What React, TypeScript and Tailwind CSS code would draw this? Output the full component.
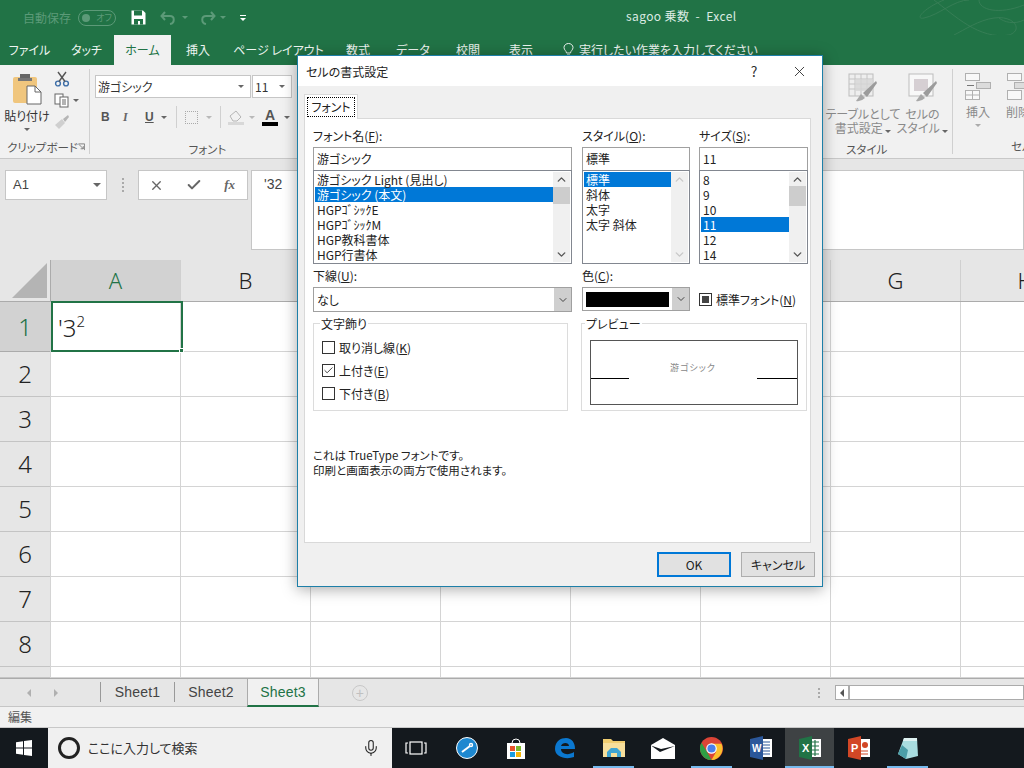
import { ChevronDown, ChevronUp, Check, X, Mic } from 'lucide-react'

const jp = 'font-["Noto_Sans_CJK_JP","Noto_Sans",sans-serif] [font-feature-settings:"palt"]'
const headerFont = "font-['Noto_Sans',sans-serif] font-light"

const tabs = [
  { label: 'ファイル', w: 'w-[59px]' },
  { label: 'タッチ', w: 'w-[55px]' },
  { label: 'ホーム', w: 'w-[57px]', active: true },
  { label: '挿入', w: 'w-[54px]' },
  { label: 'ページ レイアウト', w: 'w-[107px]' },
  { label: '数式', w: 'w-[52px]' },
  { label: 'データ', w: 'w-[58px]' },
  { label: '校閲', w: 'w-[52px]' },
  { label: '表示', w: 'w-[54px]' },
]

const columns = ['A', 'B', 'C', 'D', 'E', 'F', 'G', 'H']
const rows = [
  { n: 1, h: 'h-[50px]' },
  { n: 2, h: 'h-[45px]' },
  { n: 3, h: 'h-[45px]' },
  { n: 4, h: 'h-[45px]' },
  { n: 5, h: 'h-[45px]' },
  { n: 6, h: 'h-[45px]' },
  { n: 7, h: 'h-[45px]' },
  { n: 8, h: 'h-[45px]' },
  { n: 0, h: 'h-[11px]' },
]

function Caret({ className = '' }: { className?: string }) {
  return <span className={`inline-block w-0 h-0 border-x-[3px] border-x-transparent border-t-[3px] border-t-[#666] ${className}`} />
}

function Hotkey({ text, k, after = '' }: { text: string; k: string; after?: string }) {
  return (
    <span className="whitespace-nowrap">
      {text}(<span className="underline">{k}</span>){after}
    </span>
  )
}

function ScrollBar({ thumbTop, thumbH, disabled }: { thumbTop: string; thumbH: string; disabled?: boolean }) {
  const color = disabled ? 'text-[#c8c8c8]' : 'text-[#555]'
  return (
    <div className="w-[17px] shrink-0 bg-[#f0f0f0] flex flex-col items-center justify-between py-[1px] my-[1px] mr-[1px]">
      <ChevronUp size={13} strokeWidth={2.5} className={color} />
      <div className={`flex-1 w-full ${thumbTop}`}>
        {thumbH && <div className={`w-full bg-[#cdcdcd] ${thumbH}`} />}
      </div>
      <ChevronDown size={13} strokeWidth={2.5} className={color} />
    </div>
  )
}

function ListRow({ children, selected, className = '' }: { children: React.ReactNode; selected?: boolean; className?: string }) {
  return (
    <div className={`h-[15px] leading-[15px] pl-[2px] whitespace-nowrap ${selected ? 'bg-[#0078d7] text-white' : 'text-[#222]'} ${className}`}>
      {children}
    </div>
  )
}

function CheckRow({ label, k, checked }: { label: string; k: string; checked?: boolean }) {
  return (
    <div className="flex items-center gap-[4px] h-[23px]">
      <div className="w-[13px] h-[13px] border border-[#333] bg-white flex items-center justify-center">
        {checked && <Check size={11} strokeWidth={1.8} className="text-[#222]" />}
      </div>
      <Hotkey text={label} k={k} />
    </div>
  )
}

function Dialog() {
  return (
    <div className={`absolute left-[297px] top-[55px] w-[526px] h-[532px] bg-[#f0f0f0] border border-[#1d7fa8] shadow-[0_2px_14px_rgba(0,0,0,0.35)] flex flex-col text-[12px] leading-[15px] text-[#222] ${jp}`}>
      <div className="h-[30px] bg-white flex items-center pl-[8px] shrink-0">
        <span className="flex-1">セルの書式設定</span>
        <span className="text-[14px] w-[20px] text-center mr-[27px] text-[#333]">?</span>
        <X size={17} strokeWidth={1.2} className="mr-[14px] text-[#222]" />
      </div>
      <div className="pl-[6px] pr-[11px] pt-[8px] flex-1 flex flex-col">
        <div className="w-[54px] h-[25px] bg-white border border-b-0 border-[#d9d9d9] flex items-center justify-center relative z-10 mb-[-1px]">
          <span className="border border-dotted border-black px-[3px] h-[20px] leading-[18px] whitespace-nowrap">フォント</span>
        </div>
        <div className="h-[425px] bg-white border border-[#d9d9d9] pl-[8px] pr-[3px] pt-[8px] flex flex-col">
          <div className="grid grid-cols-[259px_108px_108px] gap-x-[10px]">
            <div className="h-[20px] leading-[18px]"><Hotkey text="フォント名" k="F" after=":" /></div>
            <div className="h-[20px] leading-[18px]"><Hotkey text="スタイル" k="O" after=":" /></div>
            <div className="h-[20px] leading-[18px] -ml-[1px]"><Hotkey text="サイズ" k="S" after=":" /></div>

            <div className="h-[24px] border border-[#a0a0a0] bg-white pl-[3px] leading-[22px]">游ゴシック</div>
            <div className="h-[24px] border border-[#a0a0a0] bg-white pl-[3px] leading-[22px]">標準</div>
            <div className="h-[24px] border border-[#a0a0a0] bg-white pl-[3px] leading-[22px] -ml-[1px]">11</div>

            <div className="h-[94px] border border-[#828790] bg-white flex -mt-[1px] overflow-hidden">
              <div className="flex-1 pt-[1px] pl-[1px]">
                <ListRow>游ゴシック Light (見出し)</ListRow>
                <ListRow selected>游ゴシック (本文)</ListRow>
                <ListRow>HGPｺﾞｼｯｸE</ListRow>
                <ListRow>HGPｺﾞｼｯｸM</ListRow>
                <ListRow>HGP教科書体</ListRow>
                <ListRow>HGP行書体</ListRow>
              </div>
              <ScrollBar thumbTop="pt-[1px]" thumbH="h-[17px]" />
            </div>
            <div className="h-[94px] border border-[#828790] bg-white flex -mt-[1px] overflow-hidden">
              <div className="flex-1 pt-[1px] pl-[1px]">
                <ListRow selected>標準</ListRow>
                <ListRow>斜体</ListRow>
                <ListRow>太字</ListRow>
                <ListRow>太字 斜体</ListRow>
              </div>
              <ScrollBar thumbTop="" thumbH="" disabled />
            </div>
            <div className="h-[94px] border border-[#828790] bg-white flex -mt-[1px] -ml-[1px] overflow-hidden">
              <div className="flex-1 pt-[1px] pl-[1px]">
                <ListRow>8</ListRow>
                <ListRow>9</ListRow>
                <ListRow>10</ListRow>
                <ListRow selected>11</ListRow>
                <ListRow>12</ListRow>
                <ListRow>14</ListRow>
              </div>
              <ScrollBar thumbTop="" thumbH="h-[20px]" />
            </div>
          </div>

          <div className="grid grid-cols-[259px_108px_108px] gap-x-[10px] mt-[4px]">
            <div className="h-[19px] leading-[15px]"><Hotkey text="下線" k="U" after=":" /></div>
            <div className="h-[19px] leading-[15px] col-span-2"><Hotkey text="色" k="C" after=":" /></div>

            <div className="h-[25px] border border-[#a0a0a0] bg-white flex items-center pl-[3px]">
              <span className="flex-1">なし</span>
              <div className="w-[17px] h-full bg-[#cfcfcf] flex items-center justify-center">
                <ChevronDown size={12} className="text-[#444]" />
              </div>
            </div>
            <div className="h-[24px] border border-[#a0a0a0] bg-white flex items-center pl-[3px]">
              <div className="flex-1 h-[15px] bg-black mr-[3px]" />
              <div className="w-[17px] h-full bg-[#cfcfcf] flex items-center justify-center">
                <ChevronDown size={12} className="text-[#444]" />
              </div>
            </div>
            <div className="flex items-center gap-[4px] h-[25px] whitespace-nowrap -ml-[1px]">
              <div className="w-[13px] h-[13px] border border-[#333] bg-white flex items-center justify-center">
                <div className="w-[7px] h-[7px] bg-[#444]" />
              </div>
              <Hotkey text="標準フォント" k="N" />
            </div>
          </div>

          <div className="flex gap-[13px] mt-[5px]">
            <fieldset className="w-[258px] h-[94px] border border-[#dcdcdc] pl-[8px]">
              <legend className="-ml-[2px] px-[1px] leading-[13px] text-[12px]">文字飾り</legend>
              <div className="pt-[6px]">
                <CheckRow label="取り消し線" k="K" />
                <CheckRow label="上付き" k="E" checked />
                <CheckRow label="下付き" k="B" />
              </div>
            </fieldset>
            <fieldset className="w-[223px] h-[94px] border border-[#dcdcdc] px-[8px]">
              <legend className="-ml-[5px] px-[1px] leading-[13px] text-[12px]">プレビュー</legend>
              <div className="h-[65px] w-[208px] border border-[#555] mt-[10px] flex items-center">
                <div className="w-[38px] h-[1px] bg-black mt-[11px]" />
                <div className="flex-1 text-center text-[9px] text-[#888] tracking-[1px] -mt-[10px]">游ゴシック</div>
                <div className="w-[40px] h-[1px] bg-black mt-[11px]" />
              </div>
            </fieldset>
          </div>

          <div className="mt-[37px] text-[11.5px]">
            <div>これは TrueType フォントです。</div>
            <div>印刷と画面表示の両方で使用されます。</div>
          </div>
        </div>
        <div className="flex justify-end gap-[10px] mt-[9px] -mr-[4px]">
          <div className="w-[74px] h-[25px] border-2 border-[#0078d7] bg-[#e1e1e1] flex items-center justify-center">OK</div>
          <div className="w-[74px] h-[25px] border border-[#adadad] bg-[#e1e1e1] flex items-center justify-center">キャンセル</div>
        </div>
      </div>
    </div>
  )
}

function PasteIcon() {
  return (
    <svg width="30" height="32" viewBox="0 0 30 32">
      <rect x="1" y="4" width="24" height="26" rx="2" fill="#f0c67e" />
      <rect x="8" y="1" width="10" height="6" fill="#666" />
      <rect x="6" y="5" width="14" height="3" fill="#777" />
      <path d="M15 13h8l6 6v12H15z" fill="#fff" stroke="#666" />
      <path d="M23 13v6h6" fill="none" stroke="#666" />
    </svg>
  )
}

function TableStyleIcon({ cell }: { cell?: boolean }) {
  return (
    <svg width="30" height="30" viewBox="0 0 30 30">
      <rect x="1" y="1" width="24" height="22" fill={cell ? '#f8f8f8' : '#eeeeee'} stroke="#bdbdbd" />
      {cell ? (
        <rect x="6" y="6" width="14" height="12" fill="#d6cfd3" />
      ) : (
        <path d="M1 6h24M1 11h24M1 16h24M7 1v22M13 1v22M19 1v22" stroke="#c4c4c4" fill="none" />
      )}
      {!cell && <rect x="7" y="6" width="18" height="12" fill="#d6d6d6" opacity="0.8" />}
      <path d="M8 28 L13 21 L17 25 Q13 29 8 28Z" fill="#a8a8a8" />
      <path d="M15 20 L28 8 L29 10 L19 24Z" fill="#9c9c9c" />
    </svg>
  )
}

function Ribbon() {
  return (
    <div className="h-[94px] bg-[#f1f1f1] border-b border-[#c8c8c8] flex text-[#444] text-[12px] overflow-hidden">
      <div className="w-[90px] shrink-0 border-r border-[#d0d0d0] my-[4px] flex flex-col">
        <div className="flex h-[78px] -mt-[1px]">
          <div className="w-[54px] flex flex-col items-center pt-[5px]">
            <PasteIcon />
            <span className="text-[12px] leading-[14px] mt-[4px] whitespace-nowrap text-[#333]">貼り付け</span>
            <Caret className="mt-[5px]" />
          </div>
          <div className="flex flex-col items-start pt-[3px] gap-[6px]">
            <svg width="16" height="16" viewBox="0 0 16 16" fill="none" stroke="#3d6ea8" strokeWidth="1.4">
              <circle cx="4" cy="12.5" r="2.4" />
              <circle cx="12" cy="12.5" r="2.4" />
              <path d="M5 10.5 L12 1M11 10.5 L4 1" stroke="#555" />
            </svg>
            <div className="flex items-center gap-[3px]">
              <svg width="16" height="15" viewBox="0 0 16 15" fill="#fff" stroke="#666">
                <rect x="1" y="1" width="8" height="10" />
                <rect x="6" y="4" width="8" height="10" />
                <path d="M8 7h4M8 9h4M8 11h4" />
              </svg>
              <Caret />
            </div>
            <svg width="16" height="16" viewBox="0 0 16 16">
              <path d="M9 5 L14 1 L15 3 L11 8Z" fill="#b5b5b5" />
              <path d="M1 11 L8 5 L11 9 L5 15Z" fill="#cfcfcf" />
            </svg>
          </div>
        </div>
        <div className="flex items-center justify-between pl-[7px] pr-[4px] text-[11.5px] leading-[14px] -mt-[1px] text-[#555]">
          <span className="whitespace-nowrap">クリップボード</span>
          <svg width="8" height="8" viewBox="0 0 8 8" fill="none" stroke="#777"><path d="M0.5 0.5h7v7M1 1 L6 6M3 6h3V3" /></svg>
        </div>
      </div>

      <div className="w-[234px] shrink-0 flex flex-col pl-[5px] pt-[10px]">
        <div className="flex gap-[1px]">
          <div className="w-[156px] h-[23px] border border-[#c6c6c6] bg-white flex items-center justify-between pl-[2px] pr-[6px] text-[#333]">
            <span>游ゴシック</span>
            <Caret />
          </div>
          <div className="w-[40px] h-[23px] border border-[#c6c6c6] bg-white flex items-center justify-between pl-[2px] pr-[6px] text-[#333]">
            <span>11</span>
            <Caret />
          </div>
        </div>
        <div className="flex items-center h-[24px] mt-[7px] pl-[6px] text-[#555]">
          <span className="font-bold w-[22px] font-['Liberation_Sans',sans-serif]">B</span>
          <span className="italic font-bold text-[#666] w-[22px] font-['Liberation_Serif',serif]">I</span>
          <span className="underline font-bold w-[16px] font-['Liberation_Sans',sans-serif]">U</span>
          <Caret className="mr-[9px]" />
          <div className="w-[1px] h-[22px] bg-[#d0d0d0] mr-[8px]" />
          <div className="w-[13px] h-[13px] border border-dotted border-[#aaa] mr-[8px]" />
          <Caret className="mr-[8px] opacity-40" />
          <div className="w-[1px] h-[22px] bg-[#d0d0d0] mr-[7px]" />
          <svg width="16" height="17" viewBox="0 0 16 17" className="mr-[5px]">
            <path d="M2 7 L8 2 L13 8 L9 12 H5Z" fill="none" stroke="#b5b5b5" />
            <rect x="0" y="13" width="16" height="3" fill="#d8d8d8" />
          </svg>
          <Caret className="mr-[7px] opacity-40" />
          <div className="flex flex-col items-center w-[16px] mr-[6px]">
            <span className="font-bold text-[14px] leading-[13px] font-['Liberation_Sans',sans-serif]">A</span>
            <div className="w-full h-[4px] bg-black" />
          </div>
          <Caret />
        </div>
        <div className="text-center text-[11.5px] leading-[14px] mt-[13px] pr-[4px] text-[#555]">フォント</div>
      </div>

      <div className="flex-1" />

      <div className="w-[134px] shrink-0 flex flex-col border-r border-[#d0d0d0] my-[4px] text-[#8a8a8a]">
        <div className="flex pl-[14px] pt-[4px]">
          <div className="w-[60px] flex flex-col items-center">
            <TableStyleIcon />
            <div className="text-center text-[12px] leading-[14px] mt-[4px] whitespace-nowrap">テーブルとして<br />書式設定 <Caret /></div>
          </div>
          <div className="w-[60px] flex flex-col items-center">
            <TableStyleIcon cell />
            <div className="text-center text-[12px] leading-[14px] mt-[4px] whitespace-nowrap">セルの<br />スタイル <Caret /></div>
          </div>
        </div>
        <div className="text-[11.5px] leading-[14px] mt-[7px] text-[#555] pl-[27px]">スタイル</div>
      </div>

      <div className="w-[71px] shrink-0 flex pl-[3px] pt-[8px] text-[#8a8a8a]">
        <div className="w-[44px] shrink-0 flex flex-col items-center">
          <svg width="28" height="27" viewBox="0 0 28 27" fill="#f8f8f8" stroke="#b0b0b0">
            <rect x="1.500" y="0.500" width="14" height="7" />
            <rect x="1.500" y="17.500" width="14" height="9" />
            <path d="M8.500 17.500v9M1.500 22h14" />
            <rect x="12.500" y="9.500" width="14" height="6" fill="#dcdcdc" />
            <path d="M3 12.500h7" stroke="#777" />
          </svg>
          <span className="mt-[5px] text-[12px] leading-[14px]">挿入</span>
          <Caret className="mt-[5px] opacity-50" />
          <span className="mt-[12px] text-[#555] whitespace-nowrap text-[11.5px] leading-[14px] translate-x-[44px]">セル</span>
        </div>
        <div className="shrink-0 flex flex-col items-start pl-[6px]">
          <svg width="28" height="27" viewBox="0 0 28 27" fill="#f8f8f8" stroke="#b0b0b0">
            <rect x="1.500" y="0.500" width="14" height="7" />
            <rect x="1.500" y="17.500" width="14" height="9" />
            <rect x="8.500" y="9.500" width="12" height="6" fill="#dcdcdc" />
          </svg>
          <span className="mt-[5px] text-[12px] leading-[14px] whitespace-nowrap">削除</span>
        </div>
      </div>
    </div>
  )
}

function TaskbarIcon({ children, running, active }: { children: React.ReactNode; running?: boolean; active?: boolean }) {
  return (
    <div className={`w-[49px] h-full relative flex items-center justify-center shrink-0 ${active ? 'bg-[#3e4244]' : ''}`}>
      {children}
      {running && <div className={`absolute bottom-0 h-[2px] bg-[#76b9ed] ${active ? 'inset-x-0' : 'inset-x-[4px]'}`} />}
    </div>
  )
}

function Taskbar() {
  return (
    <div className="h-[40px] bg-[#14191e] flex shrink-0">
      <div className="w-[48px] flex items-center justify-center">
        <svg width="16" height="16" viewBox="0 0 16 16" fill="#fff">
          <path d="M0 2.300 L7 1.300 V7.500 H0Z" />
          <path d="M8 1.100 L16 0 V7.500 H8Z" />
          <path d="M0 8.500 H7 V14.700 L0 13.700Z" />
          <path d="M8 8.500 H16 V16 L8 14.900Z" />
        </svg>
      </div>
      <div className="w-[344px] bg-[#f0f0f0] flex items-center pl-[10px] text-[13px] text-[#333]">
        <div className="w-[22px] h-[22px] rounded-full border-[3px] border-[#222] mr-[8px]" />
        <span className="flex-1">ここに入力して検索</span>
        <Mic size={18} strokeWidth={1.4} className="mr-[12px] text-[#222]" />
      </div>
      <div className="w-[48px] flex items-center justify-center">
        <svg width="22" height="14" viewBox="0 0 22 14" fill="none" stroke="#fff" strokeWidth="1.200">
          <rect x="5" y="1" width="12" height="12" />
          <path d="M3 2H1v10h2M19 2h2v10h-2" />
        </svg>
      </div>
      <div className="w-[2px]" />
      <TaskbarIcon>
        <div className="w-[22px] h-[22px] rounded-full bg-[#1e88d0] border border-white flex items-center justify-center">
          <svg width="14" height="14" viewBox="0 0 14 14" fill="none" stroke="#fff" strokeWidth="2"><path d="M2 11 L10 5" /><circle cx="11" cy="4" r="1.500" strokeWidth="1.400" /></svg>
        </div>
      </TaskbarIcon>
      <TaskbarIcon>
        <svg width="24" height="24" viewBox="0 0 24 24">
          <path d="M8 7 A4 4 0 0 1 16 7" fill="none" stroke="#fff" strokeWidth="1" />
          <rect x="3" y="7" width="18" height="16" fill="#fff" />
          <rect x="6" y="10" width="5" height="5" fill="#e8532b" />
          <rect x="12" y="10" width="5" height="5" fill="#7cb82f" />
          <rect x="6" y="16" width="5" height="5" fill="#1b9de2" />
          <rect x="12" y="16" width="5" height="5" fill="#f5b50a" />
        </svg>
      </TaskbarIcon>
      <TaskbarIcon>
        <svg width="22" height="22" viewBox="0 0 22 22">
          <path d="M1 12 C1 4 7 1 12 1 C18 1 21 6 21 12 H7 C7 17 14 19 20 15 V20 C12 23 1 20 1 12Z M7 9 H15 C15 5 8 5 7 9Z" fill="#0b78d0" fillRule="evenodd" />
        </svg>
      </TaskbarIcon>
      <TaskbarIcon running>
        <svg width="24" height="20" viewBox="0 0 24 20">
          <path d="M1 1 H9 L11 3 H23 V19 H1Z" fill="#f0cd70" />
          <path d="M1 5 H23 V19 H1Z" fill="#f7df9c" />
          <path d="M5 19 V14 L9 10 H15 L19 14 V19 H15 V15 H9 V19Z" fill="#3fa5d4" />
        </svg>
      </TaskbarIcon>
      <TaskbarIcon>
        <svg width="24" height="21" viewBox="0 0 24 21">
          <path d="M0 7 L12 0 L24 7 V21 H0Z" fill="#fff" />
          <path d="M0 7.500 L9 14 L24 8 L10 11Z" fill="#14191e" />
        </svg>
      </TaskbarIcon>
      <TaskbarIcon running>
        <svg width="23" height="23" viewBox="0 0 24 24">
          <circle cx="12" cy="12" r="12" fill="#db4437" />
          <path d="M12 24 A12 12 0 0 1 1.600 6 L7 15 L12 24Z" fill="#2f9e44" />
          <path d="M12 24 L17 15 L12 7 H22.400 A12 12 0 0 1 12 24Z" fill="#fbc02d" />
          <circle cx="12" cy="12" r="5.500" fill="#fff" />
          <circle cx="12" cy="12" r="4.300" fill="#4a80ec" />
        </svg>
      </TaskbarIcon>
      <TaskbarIcon>
        <svg width="24" height="24" viewBox="0 0 24 24">
          <rect x="11" y="3" width="12" height="18" fill="#fff" />
          <path d="M13 6h8M13 9h8M13 12h8M13 15h8M13 18h8" stroke="#2b579a" strokeWidth="1.200" />
          <path d="M1 3 L14 0 V24 L1 21Z" fill="#2b579a" />
          <text x="3" y="16" fontSize="10" fontWeight="700" fill="#fff" fontFamily="Liberation Sans">W</text>
        </svg>
      </TaskbarIcon>
      <TaskbarIcon running active>
        <svg width="24" height="24" viewBox="0 0 24 24">
          <rect x="11" y="3" width="12" height="18" fill="#fff" />
          <path d="M13 6h8M13 10h8M13 14h8M13 18h8M17 4v16" stroke="#217346" strokeWidth="1.200" />
          <path d="M1 3 L14 0 V24 L1 21Z" fill="#217346" />
          <text x="4" y="16" fontSize="11" fontWeight="700" fill="#fff" fontFamily="Liberation Sans">X</text>
        </svg>
      </TaskbarIcon>
      <TaskbarIcon>
        <svg width="24" height="24" viewBox="0 0 24 24">
          <rect x="11" y="3" width="12" height="18" fill="#fff" />
          <path d="M14 15h7M14 18h7" stroke="#d24726" strokeWidth="1.200" />
          <circle cx="18" cy="9" r="3" fill="#d24726" />
          <path d="M1 3 L14 0 V24 L1 21Z" fill="#d24726" />
          <text x="4" y="16" fontSize="11" fontWeight="700" fill="#fff" fontFamily="Liberation Sans">P</text>
        </svg>
      </TaskbarIcon>
      <TaskbarIcon running>
        <svg width="24" height="24" viewBox="0 0 24 24">
          <path d="M8 2 H21 L22 20 L10 23 L2 18Z" fill="#a9dde0" />
          <path d="M6 9 L2 18 L10 23 L12 14Z" fill="#4c9ea8" />
          <path d="M8 2 H21 L21 5 H7Z" fill="#dff2f2" />
        </svg>
      </TaskbarIcon>
    </div>
  )
}

export default function App() {
  return (
    <div className={`w-[1024px] h-[768px] relative overflow-hidden flex flex-col bg-[#e6e6e6] ${jp}`}>
      {/* title bar */}
      <div className="h-[35px] bg-[#217346] relative flex items-center shrink-0 text-[12px]">
        <span className="ml-[23px] text-[#5c9a78] whitespace-nowrap">自動保存</span>
        <div className="ml-[7px] w-[38px] h-[16px] rounded-full border border-[#5c9a78] flex items-center px-[3px] justify-between text-[#5c9a78] text-[9px]">
          <div className="w-[8px] h-[8px] rounded-full bg-[#5c9a78]" />
          <span className="leading-none">オフ</span>
        </div>
        <svg width="15" height="15" viewBox="0 0 15 15" className="ml-[15px]" fill="none">
          <path d="M0.500 0.500 H12 L14.500 3 V14.500 H0.500Z" fill="#fff" />
          <rect x="3" y="0.500" width="8" height="5" fill="#217346" />
          <rect x="3" y="9" width="9" height="5.500" fill="#217346" />
          <rect x="7" y="11" width="2" height="3.500" fill="#fff" />
        </svg>
        <svg width="18" height="14" viewBox="0 0 18 14" className="ml-[14px]" fill="none" stroke="#5c9a78" strokeWidth="2">
          <path d="M5 1 L1.500 5 L5 9M2 5 H10 C15 5 15 12 10 13" />
        </svg>
        <Caret className="ml-[4px] !border-t-[#5c9a78]" />
        <svg width="18" height="14" viewBox="0 0 18 14" className="ml-[10px]" fill="none" stroke="#5c9a78" strokeWidth="2">
          <path d="M13 1 L16.500 5 L13 9M16 5 H8 C3 5 3 12 8 13" />
        </svg>
        <Caret className="ml-[4px] !border-t-[#5c9a78]" />
        <div className="ml-[14px] flex flex-col items-center gap-[2px]">
          <div className="w-[6px] h-[1px] bg-white" />
          <Caret className="!border-t-white" />
        </div>
        <span className="absolute left-[626px] top-[8px] text-[12px] leading-[16px] text-[#dcebe3] whitespace-nowrap tracking-[0.4px]">sagoo 乗数&nbsp; -&nbsp; Excel</span>
        <svg width="130" height="35" viewBox="0 0 130 35" className="absolute right-0 top-0" fill="none" stroke="#3b8059" strokeWidth="0.800">
          <path d="M50 0 C30 8 20 20 30 18 C45 15 60 0 75 0 M40 0 C60 15 85 40 115 35 C130 30 120 15 100 18 C85 20 70 30 60 35 M85 0 C85 10 105 15 130 5 M130 20 C120 25 110 22 105 18" />
        </svg>
      </div>

      {/* ribbon tabs */}
      <div className="h-[30px] bg-[#217346] flex shrink-0 text-[12px] text-[#eef5f1]">
        {tabs.map((t) => (
          <div key={t.label} className={`${t.w} shrink-0 flex items-center justify-center whitespace-nowrap ${t.active ? 'bg-[#f1f1f1] text-[#217346]' : ''}`}>
            {t.label}
          </div>
        ))}
        <div className="ml-[15px] flex items-center gap-[5px] whitespace-nowrap">
          <svg width="11" height="14" viewBox="0 0 11 14" fill="none" stroke="#eef5f1">
            <path d="M3.500 10 C3.500 8 1 7 1 4.500 A4.500 4 0 0 1 10 4.500 C10 7 7.500 8 7.500 10Z M4 12h3M4.500 13.500h2" />
          </svg>
          <span>実行したい作業を入力してください</span>
        </div>
      </div>

      <Ribbon />

      {/* formula bar */}
      <div className="h-[101px] shrink-0 bg-[#e6e6e6] flex items-start pt-[11px] pl-[5px] text-[#444]">
        <div className="w-[102px] h-[30px] bg-white border border-[#c6c6c6] flex items-center justify-between pl-[7px] pr-[5px] text-[13px]">
          <span className="font-['Liberation_Sans',sans-serif]">A1</span>
          <span className="inline-block w-0 h-0 border-x-[4px] border-x-transparent border-t-[4px] border-t-[#666]" />
        </div>
        <div className="w-[31px] h-[30px] flex items-center justify-center">
          <div className="flex flex-col gap-[2px]">
            <div className="w-[2px] h-[2px] bg-[#aaa]" />
            <div className="w-[2px] h-[2px] bg-[#aaa]" />
            <div className="w-[2px] h-[2px] bg-[#aaa]" />
            <div className="w-[2px] h-[2px] bg-[#aaa]" />
          </div>
        </div>
        <div className="w-[110px] h-[30px] bg-white border border-[#c6c6c6] flex items-center justify-between pl-[10px] pr-[12px] text-[#666]">
          <X size={15} strokeWidth={2.2} />
          <Check size={16} strokeWidth={3} />
          <span className="italic font-bold text-[13px] font-['Liberation_Serif',serif]">fx</span>
        </div>
        <div className="ml-[3px] flex-1 h-[80px] bg-white border border-[#c6c6c6] pl-[12px] pt-[3px] text-[14px] font-['Liberation_Sans',sans-serif]">'32</div>
      </div>

      {/* sheet grid */}
      <div className="flex-1 bg-white overflow-hidden">
        <div className="grid grid-cols-[50px_repeat(8,130px)] h-[42px] bg-[#e6e6e6] border-b border-[#ababab]">
          <div className="flex items-end justify-end pr-[3px] pb-[3px]">
            <div className="w-0 h-0 border-l-[35px] border-l-transparent border-b-[35px] border-b-[#b4b4b4]" />
          </div>
          {columns.map((c) => (
            <div key={c} className={`flex items-center justify-center text-[22px] ${headerFont} border-l ${c === 'A' ? 'bg-[#d2d2d2] text-[#217346] border-[#ababab]' : 'text-[#222] border-[#d0d0d0]'}`}>
              {c}
            </div>
          ))}
        </div>
        {rows.map((r) => (
          <div key={r.n} className={`grid grid-cols-[50px_repeat(8,130px)] ${r.h}`}>
            <div className={`flex items-center justify-center text-[24px] ${headerFont} border-b ${r.n === 1 ? 'bg-[#d2d2d2] text-[#217346] border-[#ababab]' : 'bg-[#e6e6e6] text-[#222] border-[#c4c4c4]'}`}>
              {r.n > 0 ? r.n : ''}
            </div>
            {columns.map((c) => (
              <div key={c} className="relative border-l border-b border-[#d4d4d4]">
                {r.n === 1 && c === 'A' && (
                  <div className={`absolute left-0 -top-[1px] w-[132px] h-[51px] border-2 border-[#217346] pl-[5px] text-[24px] leading-[50px] text-[#222] ${headerFont} z-10`}>
                    '3<sup className="text-[15px] align-baseline relative -top-[10px]">2</sup>
                    <div className="absolute -right-[3px] -bottom-[3px] w-[5px] h-[5px] bg-[#217346] border border-white" />
                  </div>
                )}
              </div>
            ))}
          </div>
        ))}
      </div>

      {/* sheet tabs */}
      <div className="h-[29px] bg-[#e6e6e6] border-t border-[#ababab] border-b border-b-[#c6c6c6] flex items-center shrink-0 text-[14px] tracking-[0.2px] text-[#444] font-['Liberation_Sans',sans-serif]">
        <div className="w-[100px] pl-[27px] flex gap-[23px] items-center">
          <span className="w-0 h-0 border-y-[4px] border-y-transparent border-r-[4px] border-r-[#b0b0b0]" />
          <span className="w-0 h-0 border-y-[4px] border-y-transparent border-l-[4px] border-l-[#b0b0b0]" />
        </div>
        <div className="w-[74px] h-[20px] border-l border-[#999] flex items-center justify-center -mt-[1px]">Sheet1</div>
        <div className="w-[73px] h-[20px] border-l border-[#999] flex items-center justify-center -mt-[1px]">Sheet2</div>
        <div className="w-[72px] h-[28px] bg-[#f1f1f1] border-x border-b-2 border-x-[#ababab] border-b-[#217346] text-[#217346] flex items-center justify-center self-start">Sheet3</div>
        <div className="ml-[33px] w-[16px] h-[16px] rounded-full border border-[#c8c8c8] flex items-center justify-center text-[#c0c0c0] text-[14px] leading-none">+</div>
        <div className="ml-[450px] flex flex-col gap-[2px]">
          <div className="w-[2px] h-[2px] bg-[#aaa]" />
          <div className="w-[2px] h-[2px] bg-[#aaa]" />
          <div className="w-[2px] h-[2px] bg-[#aaa]" />
        </div>
        <div className="ml-[15px] flex-1 h-[15px] bg-white border border-[#ababab] flex">
          <div className="w-[14px] border-r-2 border-[#ababab] flex items-center justify-center">
            <span className="w-0 h-0 border-y-[4px] border-y-transparent border-r-[4px] border-r-[#555]" />
          </div>
        </div>
      </div>

      {/* status bar */}
      <div className="h-[21px] bg-[#f1f1f1] border-b border-[#c8c8c8] shrink-0 flex items-center pl-[8px] text-[12px] text-[#555]">編集</div>

      <Taskbar />
      <Dialog />
    </div>
  )
}
